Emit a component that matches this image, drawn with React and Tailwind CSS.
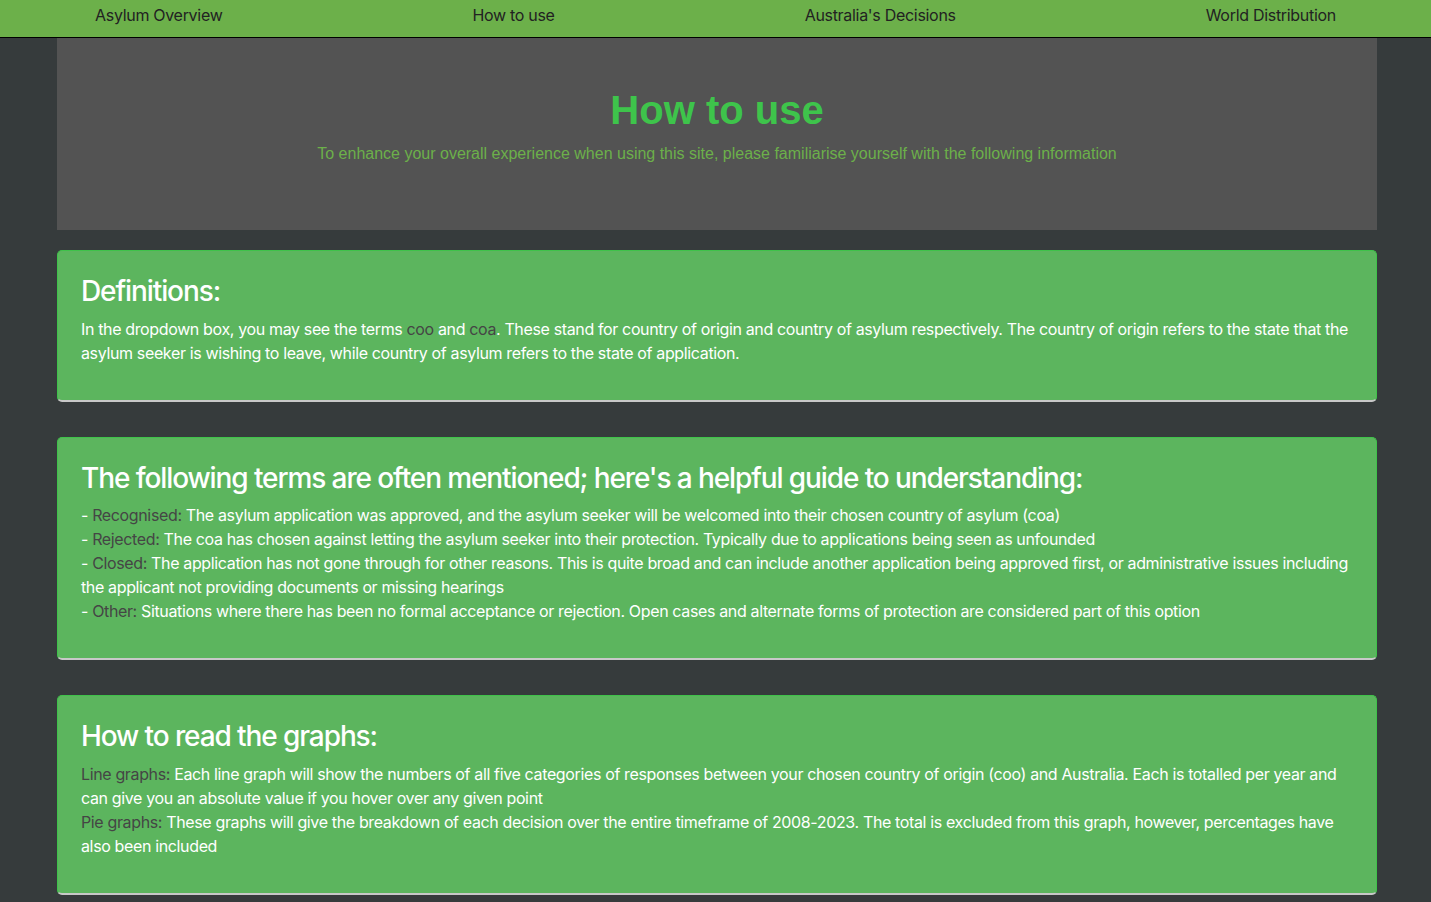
import React from 'react';

const navItems = ['Asylum Overview', 'How to use', "Australia's Decisions", 'World Distribution'];

const Term = ({ children }) => <span className="text-[#454545]">{children}</span>;

const Card = ({ title, children }) => (
  <div className="bg-[#5cb55e] border border-[#3fc24a] border-b-2 border-b-[#c8c8c8] rounded-[5px] pl-[23px] pr-6 pt-6 pb-[19px]">
    <h2 className="text-[28px] leading-[1.2] font-medium text-white mb-2 tracking-[-1.1px]">{title}</h2>
    <div className="text-white text-base leading-6 mb-4 tracking-[-0.36px]">{children}</div>
  </div>
);

const App = () => {
  return (
    <div className="min-h-screen bg-[#363b3c] font-['Inter',sans-serif]">
      <nav className="h-[38px] bg-[#6cb04a] border-b border-black flex items-start pt-[3px] justify-center gap-[250px]">
        {navItems.map((item) => (
          <span key={item} className="text-base leading-6 text-[#222] tracking-[-0.3px]">{item}</span>
        ))}
      </nav>

      <div className="mx-[57px] w-[1320px]">
        <header className="h-[192px] bg-[#535353] flex flex-col items-center pt-[48px] font-['Liberation_Sans',Arial,sans-serif]">
          <h1 className="text-[40px] leading-[48px] font-bold text-[#3ec44b]">How to use</h1>
          <p className="mt-[8px] text-base text-[#6cb04a]">
            To enhance your overall experience when using this site, please familiarise yourself with the following information
          </p>
        </header>

        <div className="mt-5 flex flex-col gap-[35px]">
          <Card title="Definitions:">
            <p>
              In the dropdown box, you may see the terms <Term>coo</Term> and <Term>coa</Term>. These stand for country of origin and country of asylum respectively. The country of origin refers to the state that the asylum seeker is wishing to leave, while country of asylum refers to the state of application.
            </p>
          </Card>

          <Card title="The following terms are often mentioned; here's a helpful guide to understanding:">
            <p>- <Term>Recognised:</Term> The asylum application was approved, and the asylum seeker will be welcomed into their chosen country of asylum (coa)</p>
            <p>- <Term>Rejected:</Term> The coa has chosen against letting the asylum seeker into their protection. Typically due to applications being seen as unfounded</p>
            <p>- <Term>Closed:</Term> The application has not gone through for other reasons. This is quite broad and can include another application being approved first, or administrative issues including the applicant not providing documents or missing hearings</p>
            <p>- <Term>Other:</Term> Situations where there has been no formal acceptance or rejection. Open cases and alternate forms of protection are considered part of this option</p>
          </Card>

          <Card title="How to read the graphs:">
            <p><Term>Line graphs:</Term> Each line graph will show the numbers of all five categories of responses between your chosen country of origin (coo) and Australia. Each is totalled per year and can give you an absolute value if you hover over any given point</p>
            <p><Term>Pie graphs:</Term> These graphs will give the breakdown of each decision over the entire timeframe of 2008-2023. The total is excluded from this graph, however, percentages have also been included</p>
          </Card>
        </div>
      </div>
    </div>
  );
};

export default App;
